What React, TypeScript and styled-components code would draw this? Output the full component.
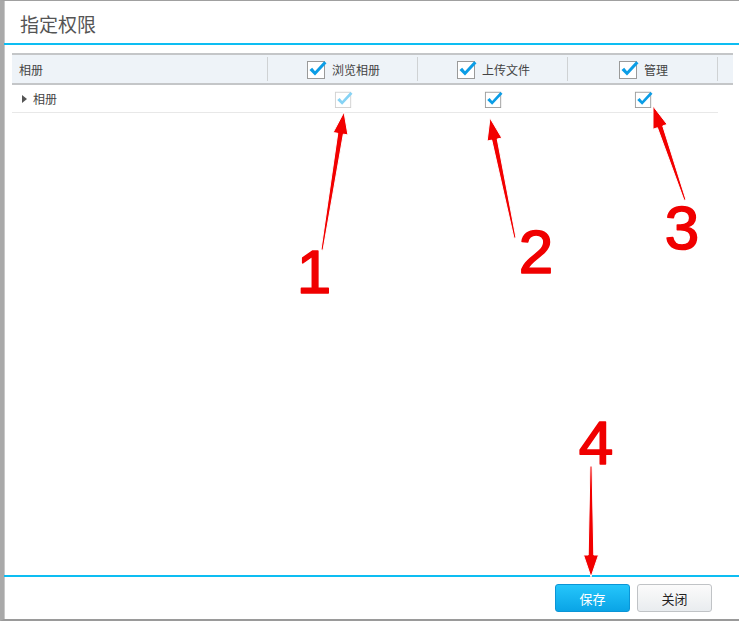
import React from "react";
import styled, { createGlobalStyle } from "styled-components";

const GlobalStyle = createGlobalStyle`
  html, body {
    margin: 0;
    padding: 0;
    background: #ffffff;
  }
  body {
    font-family: "Noto Sans CJK SC", "Liberation Sans", sans-serif;
    font-size: 12px;
    color: #333;
  }
`

const Dialog = styled.div`
  position: relative;
  width: 739px;
  height: 621px;
  box-sizing: border-box;
  display: flex;
  flex-direction: column;
  background: #fff;
  border-top: 1px solid #a0a0a0;
  border-bottom: 2px solid #9a9a9a;
  border-left: 4px solid #a9a9a9;
  box-shadow: inset 1px 0 0 #c8c8c8;
`

const TitleBar = styled.div`
  height: 39px;
  display: flex;
  align-items: center;
  padding: 3px 0 0 16px;
  border-bottom: 2px solid #0dbdf2;
  font-size: 19px;
  color: #555;
`

const Body = styled.div`
  flex: 1;
  padding: 8px 6px 0 8px;
`

const Grid = styled.div`
  display: grid;
  grid-template-columns: 256px 150px 150px 150px 15px;
`

const HeadCell = styled.div<{ $center?: boolean; $last?: boolean }>`
  height: 32px;
  box-sizing: border-box;
  background: #eef3f8;
  border-top: 2px solid #c4c6c8;
  border-bottom: 2px solid #c4c6c8;
  display: flex;
  align-items: center;
  justify-content: ${p => (p.$center ? "center" : "flex-start")};
  padding-left: ${p => (p.$center ? "0" : "7px")};
  gap: 5px;
  position: relative;
  color: #444;

  &::after {
    content: "";
    display: ${p => (p.$last ? "none" : "block")};
    position: absolute;
    right: 0;
    top: 2px;
    bottom: 2px;
    width: 1px;
    background: #cfd2d4;
  }
`

const Cell = styled.div<{ $center?: boolean; $blank?: boolean }>`
  height: 28px;
  box-sizing: border-box;
  border-bottom: ${p => (p.$blank ? "none" : "1px solid #e8e8e8")};
  display: flex;
  align-items: center;
  justify-content: ${p => (p.$center ? "center" : "flex-start")};
  padding-left: ${p => (p.$center ? "0" : "10px")};
  gap: 6px;
  color: #444;
`

const Caret = styled.span`
  width: 0;
  height: 0;
  border-top: 4px solid transparent;
  border-bottom: 4px solid transparent;
  border-left: 5px solid #555;
`

const Footer = styled.div`
  height: 42px;
  border-top: 2px solid #0dbdf2;
  display: flex;
  align-items: center;
  justify-content: flex-end;
  gap: 7px;
  padding-right: 27px;
`

const Button = styled.button<{ $primary?: boolean }>`
  width: 75px;
  height: 28px;
  border-radius: 3px;
  font-family: "Noto Sans CJK SC", sans-serif;
  font-size: 13px;
  cursor: pointer;
  color: ${p => (p.$primary ? "#fff" : "#222")};
  border: 1px solid ${p => (p.$primary ? "#0b95d6" : "#c0c3c6")};
  background: ${p =>
    p.$primary
      ? "linear-gradient(#25c6fb, #0aa4e6)"
      : "linear-gradient(#fbfbfb, #e9ecef)"};
`

const Overlay = styled.svg`
  position: absolute;
  left: -4px;
  top: -1px;
  pointer-events: none;
`

type BoxProps = { size?: number; disabled?: boolean }

const CheckBox = ({ size = 20, disabled }: BoxProps) => (
  <svg width={size + 1} height={size} viewBox="0 0 21 20">
    <rect x="1.5" y="2.5" width="17" height="17" fill="#fff" stroke={disabled ? "#cfcfcf" : "#9a9a9a"} />
    <path
      d="M3.5 11 L6.2 8.8 L9 12.3 L18.2 2.2 L20.5 4.2 L9 16.5 Z"
      fill={disabled ? "#86d3f5" : "#0b9de6"}
    />
  </svg>
)

// tapered arrow from tail to tip
const arrowPoints = (x1: number, y1: number, x2: number, y2: number) => {
  const dx = x2 - x1
  const dy = y2 - y1
  const len = Math.hypot(dx, dy)
  const ux = dx / len
  const uy = dy / len
  const nx = -uy
  const ny = ux
  const head = 22
  const bx = x2 - ux * head
  const by = y2 - uy * head
  const pts = [
    [x1 + nx * 1, y1 + ny * 1],
    [bx + nx * 2.8, by + ny * 2.8],
    [bx + nx * 7.5, by + ny * 7.5],
    [x2, y2],
    [bx - nx * 7.5, by - ny * 7.5],
    [bx - nx * 2.8, by - ny * 2.8],
    [x1 - nx * 1, y1 - ny * 1],
  ]
  return pts.map(p => p.join(",")).join(" ")
}

const arrows = [
  { from: [322, 250], to: [344, 112] },
  { from: [515, 238], to: [490, 118] },
  { from: [685, 200], to: [653, 106] },
  { from: [591, 466], to: [591, 577] },
]

const labels = [
  { t: "1", x: 314, y: 293 },
  { t: "2", x: 536, y: 273 },
  { t: "3", x: 682, y: 249 },
  { t: "4", x: 596, y: 464 },
]

const Annotations = () => (
  <Overlay width="739" height="621" viewBox="0 0 739 621">
    {arrows.map((a, i) => (
      <polygon
        key={i}
        points={arrowPoints(a.from[0], a.from[1], a.to[0], a.to[1])}
        fill="#f20000"
        stroke="#fff"
        strokeWidth="1"
      />
    ))}
    {labels.map(l => (
      <text
        key={l.t}
        x={l.x}
        y={l.y}
        textAnchor="middle"
        fontFamily="Liberation Sans, Arial, sans-serif"
        fontSize="62"
        fill="#f00000"
        stroke="#fff"
        strokeWidth="6"
        strokeLinejoin="round"
        paintOrder="stroke"
      >
        {l.t}
      </text>
    ))}
    {labels.map(l => (
      <text
        key={"r" + l.t}
        x={l.x}
        y={l.y}
        textAnchor="middle"
        fontFamily="Liberation Sans, Arial, sans-serif"
        fontSize="62"
        fill="#f00000"
        stroke="#f00000"
        strokeWidth="1.6"
        strokeLinejoin="round"
      >
        {l.t}
      </text>
    ))}
  </Overlay>
)

const columns = ["浏览相册", "上传文件", "管理"]

export default function App() {
  return (
    <>
      <GlobalStyle />
      <Dialog>
        <TitleBar>指定权限</TitleBar>
        <Body>
          <Grid>
            <HeadCell>相册</HeadCell>
            {columns.map(c => (
              <HeadCell key={c} $center>
                <CheckBox />
                <span>{c}</span>
              </HeadCell>
            ))}
            <HeadCell $last />

            <Cell>
              <Caret />
              <span>相册</span>
            </Cell>
            <Cell $center>
              <CheckBox size={18} disabled />
            </Cell>
            <Cell $center>
              <CheckBox size={18} />
            </Cell>
            <Cell $center>
              <CheckBox size={18} />
            </Cell>
            <Cell $blank />
          </Grid>
        </Body>
        <Footer>
          <Button $primary>保存</Button>
          <Button>关闭</Button>
        </Footer>
        <Annotations />
      </Dialog>
    </>
  );
}
